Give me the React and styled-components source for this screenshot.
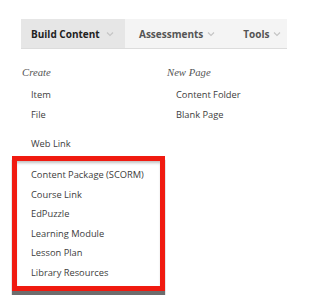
import React from "react";
import styled, { createGlobalStyle } from "styled-components";

const Global = createGlobalStyle`
  html, body { margin: 0; padding: 0; background: #fff; }
  body { font-family: "Open Sans", "Liberation Sans", sans-serif; }
`;

const Page = styled.div`
  width: 314px;
  height: 295px;
  overflow: hidden;
  padding: 19px 0 0 21px;
  box-sizing: border-box;
`;

const TabBar = styled.div`
  display: flex;
  width: 266px;
  height: 29px;
  background: #f4f4f4;
  border-bottom: 1px solid #dcdcdc;
`;

const Tab = styled.div`
  display: flex;
  align-items: center;
  gap: ${(p) => p.$gap}px;
  padding: 0 ${(p) => p.$pr}px 0 ${(p) => p.$pl}px;
  width: ${(p) => (p.$w ? p.$w + "px" : "auto")};
  box-sizing: border-box;
  background: ${(p) => (p.$active ? "#e6e6e6" : "transparent")};
  color: ${(p) => (p.$active ? "#222" : "#555")};
  font-size: 10px;
  font-weight: 700;
  white-space: nowrap;
`;

const Chevron = () => (
  <svg width="8" height="6" viewBox="0 0 8 6">
    <polyline points="1,1.5 4,4.5 7,1.5" fill="none" stroke="#c4c4c4" strokeWidth="1.1" />
  </svg>
);

const Menu = styled.div`
  display: grid;
  grid-template-columns: 145px 1fr;
  margin-top: 13px;
  margin-left: 1px;
`;

const Column = styled.div`
  display: flex;
  flex-direction: column;
`;

const Label = styled.div`
  font-family: "Liberation Serif", "DejaVu Serif", serif;
  font-style: italic;
  font-size: 10.7px;
  line-height: 20px;
  color: #555;
  margin-bottom: 3px;
`;

const Item = styled.div`
  font-size: 9.3px;
  line-height: ${(p) => p.$lh || 20}px;
  color: #3c3c3c;
  padding-left: 9px;
  margin-top: ${(p) => p.$mt || 0}px;
  white-space: nowrap;
`;

const Highlight = styled.div`
  margin: 2px 0 0 -10px;
  width: 153px;
  box-sizing: border-box;
  border: 5px solid #f01a10;
  padding: 4px 0 3px 5px;
  background: #fff;
  box-shadow: inset 0 3px 3px -1px rgba(0, 0, 0, 0.25), 0 4px 1px 0 rgba(60, 60, 60, 0.75);
`;

export default function App() {
  return (
    <>
      <Global />
      <Page>
        <TabBar>
          <Tab $active $w={104} $pl={10} $pr={0} $gap={6}>
            Build Content <Chevron />
          </Tab>
          <Tab $pl={14} $pr={10} $gap={4}>
            Assessments <Chevron />
          </Tab>
          <Tab $pl={18} $pr={0} $gap={3}>
            Tools <Chevron />
          </Tab>
        </TabBar>
        <Menu>
          <Column>
            <Label>Create</Label>
            <Item>Item</Item>
            <Item>File</Item>
            <Item $mt={9}>Web Link</Item>
            <Highlight>
              <Item $lh={19.6}>Content Package (SCORM)</Item>
              <Item $lh={19.6}>Course Link</Item>
              <Item $lh={19.6}>EdPuzzle</Item>
              <Item $lh={19.6}>Learning Module</Item>
              <Item $lh={19.6}>Lesson Plan</Item>
              <Item $lh={19.6}>Library Resources</Item>
            </Highlight>
          </Column>
          <Column>
            <Label>New Page</Label>
            <Item>Content Folder</Item>
            <Item>Blank Page</Item>
          </Column>
        </Menu>
      </Page>
    </>
  );
}
